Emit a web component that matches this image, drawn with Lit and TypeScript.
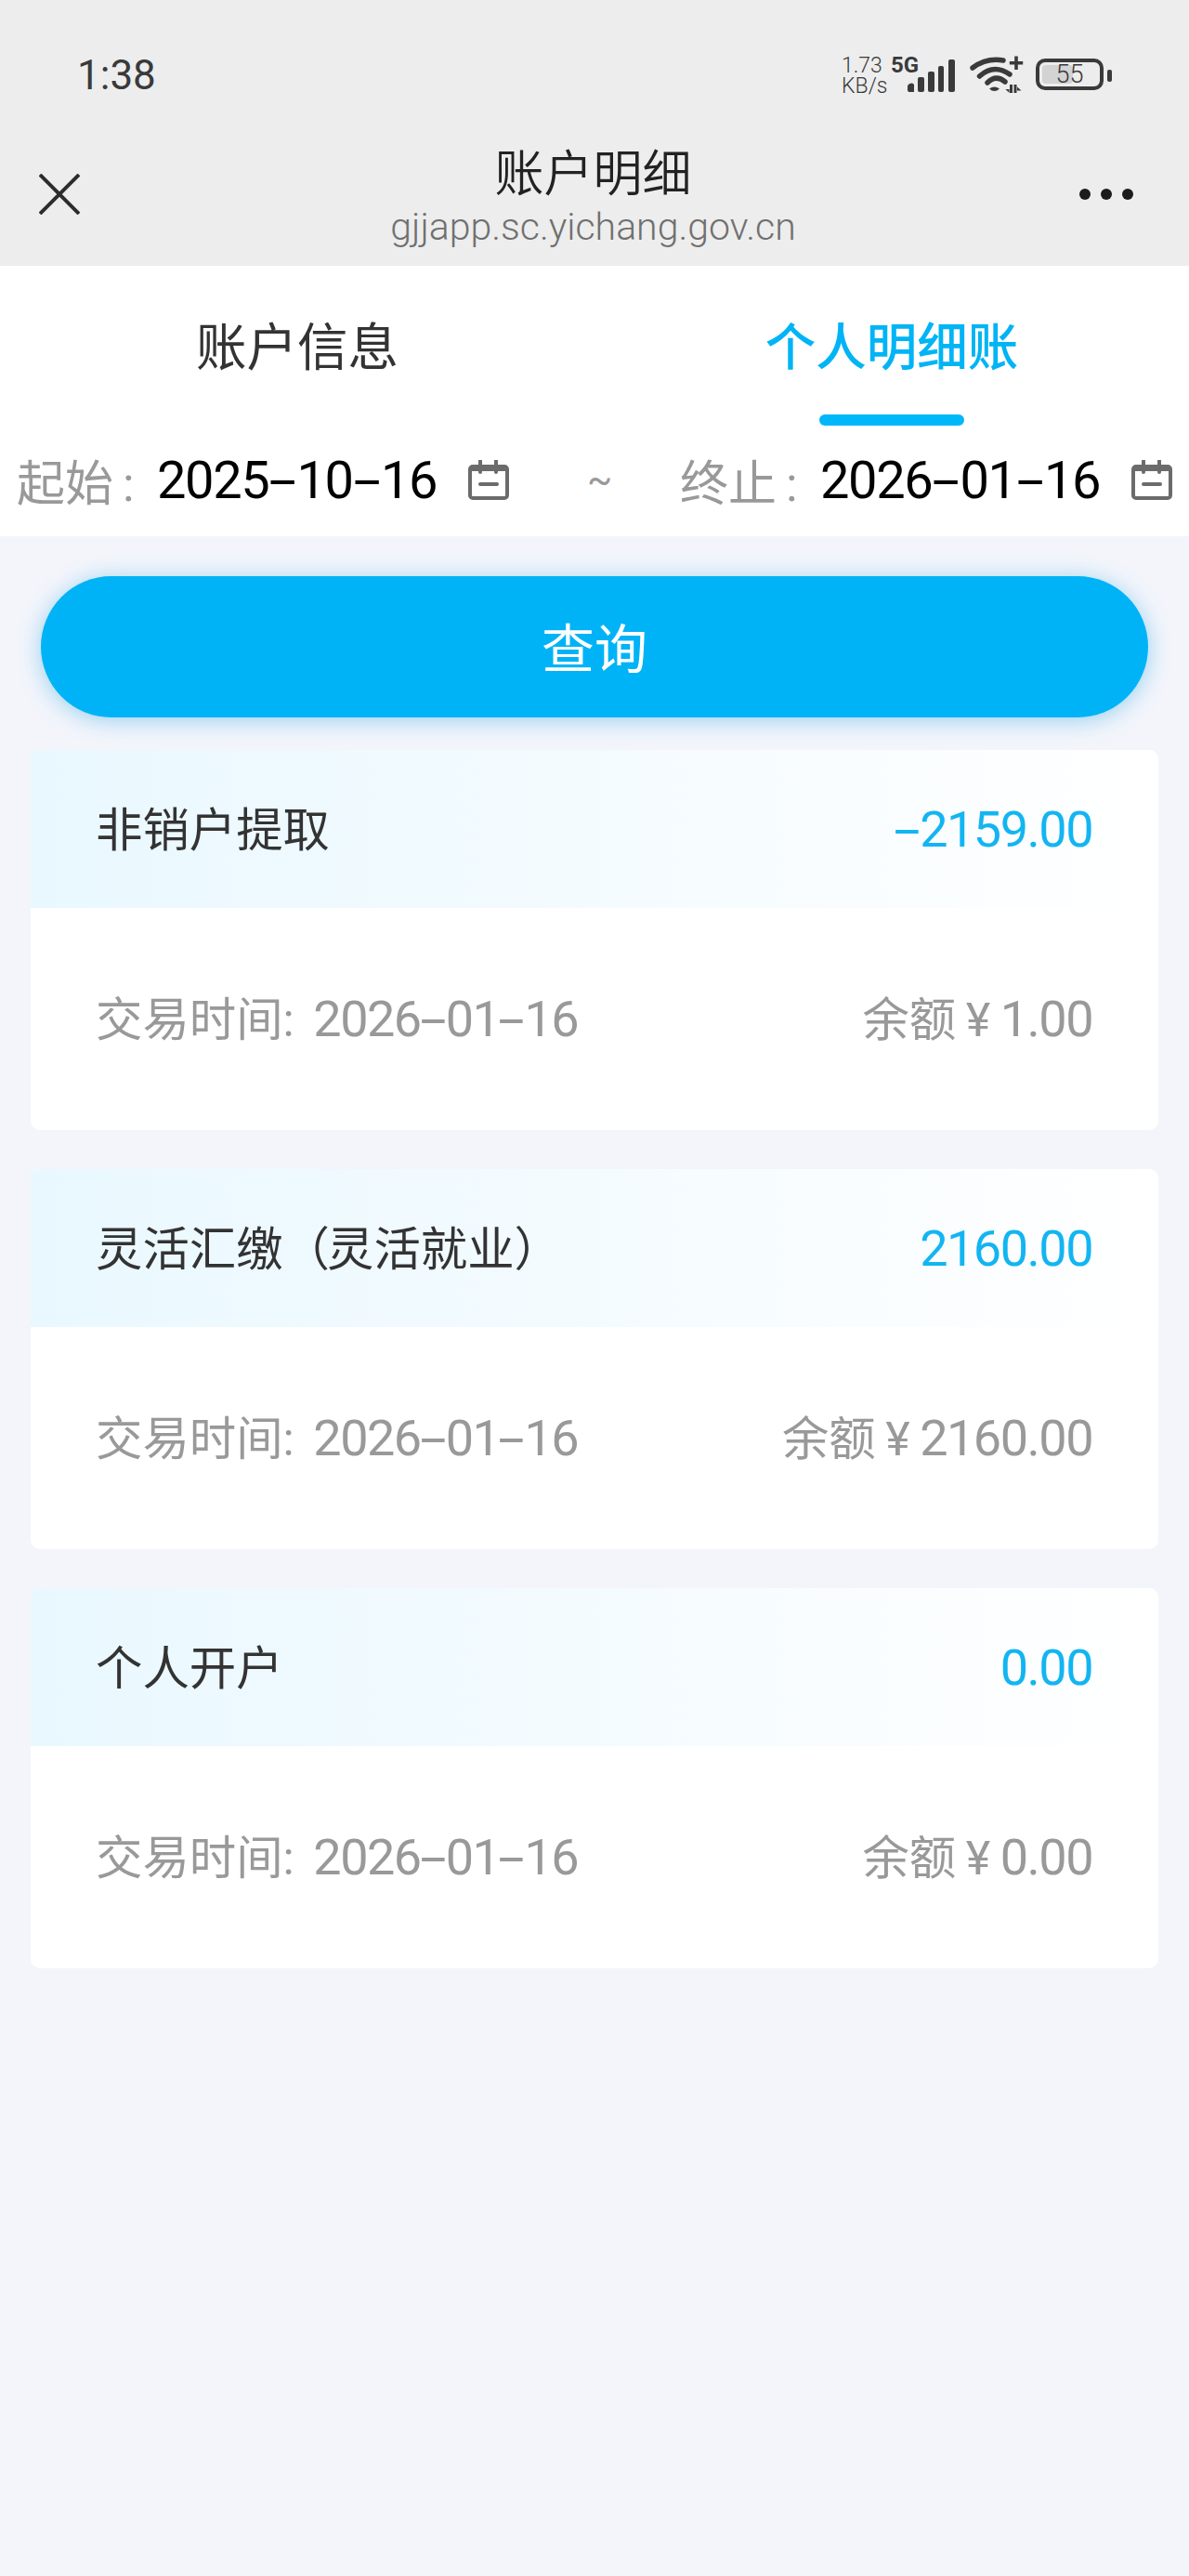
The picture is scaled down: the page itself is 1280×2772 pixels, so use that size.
import { LitElement, html, css, svg } from 'lit';
import { customElement, property } from 'lit/decorators.js';

// the reference font has long dashes, so hyphens get their own stretched box
const numStyles = css`
  .dash {
    display: inline-block;
    width: 0.54em;
    letter-spacing: 0;
    text-align: center;
    transform: scaleX(1.9);
  }
`;

const withDashes = (text: string) =>
  text.split('-').map((part, i) => (i === 0 ? part : html`<span class="dash">-</span>${part}`));

const calendarIcon = svg`
  <g fill="none" stroke="#6b6b6b" stroke-width="4">
    <rect x="2" y="7" width="40" height="34" rx="3" />
    <path d="M2 9h40" stroke-width="6" />
    <path d="M13 1v12M30 1v12" stroke-linecap="round" />
    <path d="M13 26h18" stroke-linecap="round" />
  </g>
`;

@customElement('date-field')
export class DateField extends LitElement {
  static styles = [
    numStyles,
    css`
      :host {
        display: flex;
        align-items: center;
      }

      .label {
        color: #999;
        font-size: 52px;
        width: 151px;
        white-space: pre;
      }

      .colon {
        margin-left: 10px;
      }

      .value {
        color: #000;
        font-size: 56px;
        width: 335px;
        letter-spacing: -1.4px;
      }

      svg {
        display: block;
        width: 44px;
        height: 44px;
      }
    `,
  ];

  @property() label = '';
  @property() value = '';

  protected render() {
    return html`
      <span class="label">${this.label}<span class="colon">:</span></span>
      <span class="value">${withDashes(this.value)}</span>
      <svg viewBox="0 0 44 44">${calendarIcon}</svg>
    `;
  }
}

@customElement('record-card')
export class RecordCard extends LitElement {
  static styles = [
    numStyles,
    css`
      :host {
        display: block;
        background: #fff;
        border-radius: 10px;
        overflow: hidden;
      }

      .head,
      .body {
        display: flex;
        align-items: center;
        justify-content: space-between;
        box-sizing: border-box;
        padding-left: 70px;
        padding-right: 71px;
      }

      .head {
        height: 170px;
        padding-bottom: 6px;
        background: linear-gradient(90deg, #e9f8ff 0%, #f4fbff 50%, #fff 100%);
      }

      .body {
        height: 239px;
        padding-bottom: 7px;
        color: #999;
        font-size: 50.4px;
      }

      .when {
        word-spacing: 8px;
      }

      .left {
        word-spacing: -2px;
      }

      .name {
        color: #333;
        font-size: 50.4px;
      }

      .tight {
        letter-spacing: -3px;
      }

      .amount {
        color: #13b5f1;
        margin-top: 6px;
      }

      .num {
        font-size: 54px;
        letter-spacing: -1.5px;
      }

      .num .dash {
        width: 0.5em;
      }
    `,
  ];

  @property() name = '';
  @property() amount = '';
  @property() date = '';
  @property() balance = '';

  protected render() {
    const [before, after] = this.name.split('（');
    return html`
      <div class="head">
        <span class="name"
          >${after ? html`${before}<span class="tight">（</span>${after}` : this.name}</span
        >
        <span class="amount num">${withDashes(this.amount)}</span>
      </div>
      <div class="body">
        <span class="when">交易时间: <span class="num">${withDashes(this.date)}</span></span>
        <span class="left">余额 ¥ <span class="num">${this.balance}</span></span>
      </div>
    `;
  }
}

const records = [
  { name: '非销户提取', amount: '-2159.00', date: '2026-01-16', balance: '1.00' },
  { name: '灵活汇缴（灵活就业）', amount: '2160.00', date: '2026-01-16', balance: '2160.00' },
  { name: '个人开户', amount: '0.00', date: '2026-01-16', balance: '0.00' },
];

@customElement('app-root')
export class AppRoot extends LitElement {
  static styles = css`
    :host {
      display: block;
      min-height: 2772px;
      background: #f3f5fb;
      font-family: Roboto, 'Noto Sans CJK SC', sans-serif;
      font-weight: 400;
    }

    .top {
      height: 286px;
      background: #ededed;
      box-sizing: border-box;
      display: flex;
      flex-direction: column;
    }

    /* status bar */
    .status {
      height: 160px;
      box-sizing: border-box;
      padding: 60px 92px 0 83px;
      display: flex;
      align-items: flex-start;
      color: #3a3a3a;
    }

    .time {
      font-size: 44px;
      line-height: 42px;
      flex: 1;
    }

    .speed {
      font-size: 23px;
      line-height: 22px;
      font-weight: 300;
      width: 53px;
    }

    .net {
      font-size: 24px;
      font-weight: 700;
      line-height: 20px;
      width: 17px;
      white-space: nowrap;
    }

    .signal {
      display: block;
      margin-top: 4px;
    }

    .wifi {
      display: block;
      margin: 0 13px 0 16px;
    }

    .battery {
      position: relative;
      width: 73px;
      height: 34px;
      margin-top: 3px;
      box-sizing: border-box;
      border: 4px solid #3a3a3a;
      border-radius: 10px;
      font-size: 27px;
      line-height: 26px;
      font-weight: 300;
      text-align: center;
    }

    .battery::before {
      content: '';
      position: absolute;
      left: 3px;
      top: 3px;
      bottom: 3px;
      width: 33px;
      background: #d3d3d3;
      border-radius: 4px;
    }

    .battery span {
      position: relative;
    }

    .battery::after {
      content: '';
      position: absolute;
      right: -13px;
      top: 8px;
      width: 5px;
      height: 13px;
      background: #3a3a3a;
      border-radius: 2px;
    }

    /* title bar */
    .bar {
      flex: 1;
      display: grid;
      grid-template-columns: 1fr auto 1fr;
      align-items: start;
      padding: 0 60px 0 42px;
    }

    .bar .close {
      display: block;
      margin-top: 27px;
    }

    .titles {
      text-align: center;
      margin-left: 15px;
    }

    .title {
      color: #222;
      font-size: 53px;
      line-height: 62px;
      margin-top: -3px;
      font-weight: 350;
    }

    .url {
      color: #707070;
      font-size: 41px;
      line-height: 44px;
      margin-top: 3px;
      font-weight: 300;
      white-space: nowrap;
    }

    .more {
      justify-self: end;
      display: flex;
      gap: 11px;
      margin-top: 43px;
    }

    .more i {
      width: 12px;
      height: 12px;
      border-radius: 50%;
      background: #1c1c1c;
    }

    /* tabs */
    .tabs {
      display: grid;
      grid-template-columns: 1fr 1fr;
      background: #fff;
      height: 184px;
    }

    .tab {
      display: flex;
      flex-direction: column;
      align-items: center;
      padding-top: 56px;
      color: #333;
      font-size: 54.5px;
      line-height: 64px;
      box-sizing: border-box;
    }

    .tab.active {
      color: #00b4f5;
      font-weight: 500;
    }

    .tab.active::after {
      content: '';
      margin-top: 40px;
      width: 156px;
      height: 12px;
      border-radius: 6px;
      background: #00b7f9;
    }

    /* date filter */
    .dates {
      height: 107px;
      box-sizing: border-box;
      padding: 0 0 14px 18px;
      background: #fff;
      display: flex;
      align-items: center;
    }

    .tilde {
      color: #999;
      font-size: 40px;
      width: 184px;
      padding-left: 84px;
      box-sizing: border-box;
    }

    .query {
      height: 152px;
      box-sizing: border-box;
      padding-bottom: 4px;
      margin: 43px 44px 35px;
      border-radius: 76px;
      background: #00b3f6;
      box-shadow: 0 3px 24px rgba(0, 150, 230, 0.38);
      color: #fff;
      font-size: 57px;
      display: flex;
      align-items: center;
      justify-content: center;
    }

    .list {
      display: flex;
      flex-direction: column;
      gap: 42px;
      padding: 0 33px;
    }
  `;

  protected render() {
    return html`
      <div class="top">
        <div class="status">
          <span class="time">1:38</span>
          <div class="speed">1.73<br />KB/s</div>
          <div class="net">5G</div>
          <svg class="signal" width="52" height="36" viewBox="0 0 52 36">
            <g fill="#3a3a3a">
              <path d="M1 30a4 4 0 0 1 7-3v8H3a2 2 0 0 1-2-2z" />
              <rect x="12" y="19" width="7" height="16" rx="2" />
              <rect x="23" y="13" width="7" height="22" rx="2" />
              <rect x="34" y="7" width="6" height="28" rx="2" />
              <rect x="45" y="0" width="7" height="35" rx="2" />
            </g>
          </svg>
          <svg class="wifi" width="58" height="44" viewBox="0 0 58 44">
            <g fill="none" stroke="#3a3a3a" stroke-width="5.5" stroke-linecap="round">
              <path d="M3 13Q18 2 36 5" />
              <path d="M10.500 22Q26 8 43 20" />
              <path d="M19 29Q28 20 38 28" />
            </g>
            <g fill="#3a3a3a">
              <path d="M21 35.500q5.500-4 11 0q-5.500 5-11 0z" />
              <path d="M48.200 0.500h3.600v5.400h5.400v3.600h-5.400v5.400h-3.600v-5.400h-5.400v-3.600h5.400z" />
              <path d="M43 31h3v9h-3zM38.500 36h4v4zM47.500 31h3v9h-3zM51 33.500l4.500 4h-4.500z" />
            </g>
          </svg>
          <div class="battery"><span>55</span></div>
        </div>
        <div class="bar">
          <svg class="close" width="44" height="44" viewBox="0 0 44 44">
            <path d="M1 1l42 42M43 1L1 43" stroke="#2c2c2c" stroke-width="4" fill="none" />
          </svg>
          <div class="titles">
            <div class="title">账户明细</div>
            <div class="url">gjjapp.sc.yichang.gov.cn</div>
          </div>
          <div class="more"><i></i><i></i><i></i></div>
        </div>
      </div>

      <div class="tabs">
        <div class="tab">账户信息</div>
        <div class="tab active">个人明细账</div>
      </div>

      <div class="dates">
        <date-field label="起始" value="2025-10-16"></date-field>
        <span class="tilde">~</span>
        <date-field label="终止" value="2026-01-16"></date-field>
      </div>

      <div class="query">查询</div>

      <div class="list">
        ${records.map(
          (r) => html`
            <record-card
              .name=${r.name}
              .amount=${r.amount}
              .date=${r.date}
              .balance=${r.balance}
            ></record-card>
          `,
        )}
      </div>
    `;
  }
}
